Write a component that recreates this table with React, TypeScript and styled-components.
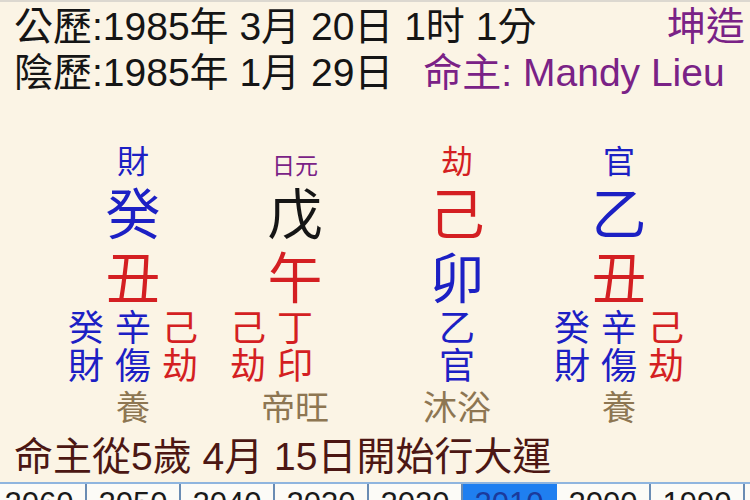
import React from 'react';
import styled, { createGlobalStyle } from 'styled-components';

const BLUE = '#1c20c4';
const RED = '#d41f22';
const PURPLE = '#7a2286';
const TAN = '#8d7652';
const BROWN = '#4c1713';
const BLACK = '#151515';

const Global = createGlobalStyle`
  html, body { margin: 0; padding: 0; background: #fbf4e5; }
  body { font-family: "Liberation Sans", "Noto Sans CJK TC", sans-serif; }
`;

const Page = styled.div`
  width: 750px;
  height: 500px;
  overflow: hidden;
  background: #fbf4e5;
  border-top: 2px solid #dcd8d0;
  box-sizing: border-box;
  display: flex;
  flex-direction: column;
`;

const Header = styled.div`
  padding: 2px 5px 0 14px;
  display: flex;
  flex-direction: column;
`;

const HeaderRow = styled.div`
  display: flex;
  align-items: center;
  gap: 30px;
  font-size: 39px;
  line-height: 46px;
  height: 46px;
  white-space: pre;
  color: ${BLACK};
`;

const Spacer = styled.div`
  flex: 1;
`;

const Purple = styled.span`
  color: ${PURPLE};
`;

const Chart = styled.div`
  margin-top: 48px;
  padding-left: 52px;
  display: grid;
  grid-template-columns: repeat(4, 162px);
`;

const Pillar = styled.div`
  display: flex;
  flex-direction: column;
  align-items: center;
`;

const Label = styled.div<{ $color: string; $small?: boolean }>`
  color: ${(p) => p.$color};
  font-size: ${(p) => (p.$small ? '23px' : '32px')};
  line-height: 36px;
  height: 36px;
  ${(p) => (p.$small ? 'padding-top: 4px; box-sizing: border-box;' : '')}
`;

const Stem = styled.div<{ $color: string }>`
  color: ${(p) => p.$color};
  font-size: 55px;
  line-height: 70px;
  height: 68px;
`;

const Branch = styled.div<{ $color: string }>`
  color: ${(p) => p.$color};
  font-size: 55px;
  line-height: 62px;
  height: 62px;
`;

const HiddenGrid = styled.div`
  display: grid;
  grid-template-columns: repeat(3, 47px);
  width: 141px;
`;

const HiddenSlot = styled.div<{ $col: number; $color: string }>`
  grid-column: ${(p) => p.$col};
  display: flex;
  flex-direction: column;
  align-items: center;
  color: ${(p) => p.$color};
  font-size: 36px;
  line-height: 38px;
`;

const Stage = styled.div`
  color: ${TAN};
  font-size: 34px;
  line-height: 44px;
  height: 44px;
`;

const Luck = styled.div`
  padding-left: 14px;
  color: ${BROWN};
  font-size: 39px;
  line-height: 50px;
  height: 50px;
  margin-top: 2px;
  white-space: pre;
`;

const Table = styled.div`
  display: flex;
  margin-left: -7px;
  border-top: 2px solid #8fb5df;
  background: #fcfbf7;
  flex: 1;
`;

const Cell = styled.div<{ $active?: boolean }>`
  flex: 0 0 94px;
  box-sizing: border-box;
  border-right: 2px solid ${(p) => (p.$active ? '#1f7ff0' : '#6a8cb4')};
  background: ${(p) => (p.$active ? '#1f7ff0' : 'transparent')};
  color: ${(p) => (p.$active ? '#1b3a9c' : '#1a1a1a')};
  font-size: 31px;
  line-height: 36px;
  padding-top: 2px;
  text-align: center;
`;

type Hidden = { s: string; g: string; c: string };
type PillarData = {
  label: string;
  labelColor: string;
  small?: boolean;
  stem: string;
  stemColor: string;
  branch: string;
  branchColor: string;
  hidden: Hidden[];
  stage: string;
};

const chou: Hidden[] = [
  { s: '癸', g: '財', c: BLUE },
  { s: '辛', g: '傷', c: BLUE },
  { s: '己', g: '劫', c: RED },
];

const pillars: PillarData[] = [
  { label: '財', labelColor: BLUE, stem: '癸', stemColor: BLUE, branch: '丑', branchColor: RED, hidden: chou, stage: '養' },
  {
    label: '日元', labelColor: PURPLE, small: true, stem: '戊', stemColor: BLACK, branch: '午', branchColor: RED,
    hidden: [
      { s: '己', g: '劫', c: RED },
      { s: '丁', g: '印', c: RED },
    ],
    stage: '帝旺',
  },
  { label: '劫', labelColor: RED, stem: '己', stemColor: RED, branch: '卯', branchColor: BLUE, hidden: [{ s: '乙', g: '官', c: BLUE }], stage: '沐浴' },
  { label: '官', labelColor: BLUE, stem: '乙', stemColor: BLUE, branch: '丑', branchColor: RED, hidden: chou, stage: '養' },
];

const slotStart = (n: number) => (n === 1 ? 2 : 1);

const years = ['2060', '2050', '2040', '2030', '2020', '2010', '2000', '1990'];

export default function App() {
  return (
    <>
      <Global />
      <Page>
        <Header>
          <HeaderRow>
            <span>公歷:1985年 3月 20日 1时 1分</span>
            <Spacer />
            <Purple>坤造</Purple>
          </HeaderRow>
          <HeaderRow>
            <span>陰歷:1985年 1月 29日</span>
            <Purple>命主: Mandy Lieu</Purple>
          </HeaderRow>
        </Header>
        <Chart>
          {pillars.map((p, i) => (
            <Pillar key={i}>
              <Label $color={p.labelColor} $small={p.small}>{p.label}</Label>
              <Stem $color={p.stemColor}>{p.stem}</Stem>
              <Branch $color={p.branchColor}>{p.branch}</Branch>
              <HiddenGrid>
                {p.hidden.map((h, j) => (
                  <HiddenSlot key={j} $col={slotStart(p.hidden.length) + j} $color={h.c}>
                    <span>{h.s}</span>
                    <span>{h.g}</span>
                  </HiddenSlot>
                ))}
              </HiddenGrid>
              <Stage>{p.stage}</Stage>
            </Pillar>
          ))}
        </Chart>
        <Luck>命主從5歲 4月 15日開始行大運</Luck>
        <Table>
          {years.map((y) => (
            <Cell key={y} $active={y === '2010'}>{y}</Cell>
          ))}
        </Table>
      </Page>
    </>
  );
}
